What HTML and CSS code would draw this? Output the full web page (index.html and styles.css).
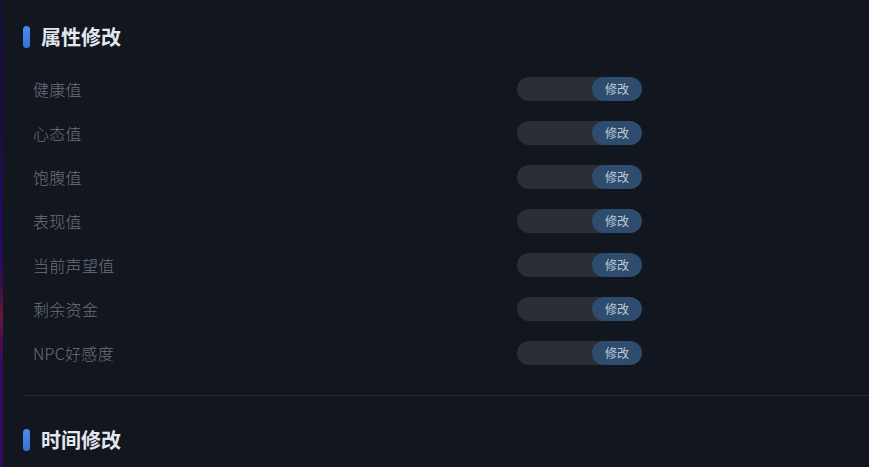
FILE: index.html
```html
<!DOCTYPE html>
<html lang="zh">
<head>
<meta charset="utf-8">
<link rel="stylesheet" href="styles.css">
</head>
<body>
<div class="frame">
  <div class="edge"></div>
  <main class="panel">
    <section class="section">
      <h2 class="section-title"><span class="bar"></span>属性修改</h2>
      <div class="rows">
        <div class="row"><span class="label">健康值</span><div class="field"><input class="input" type="text"><button class="btn">修改</button></div></div>
        <div class="row"><span class="label">心态值</span><div class="field"><input class="input" type="text"><button class="btn">修改</button></div></div>
        <div class="row"><span class="label">饱腹值</span><div class="field"><input class="input" type="text"><button class="btn">修改</button></div></div>
        <div class="row"><span class="label">表现值</span><div class="field"><input class="input" type="text"><button class="btn">修改</button></div></div>
        <div class="row"><span class="label">当前声望值</span><div class="field"><input class="input" type="text"><button class="btn">修改</button></div></div>
        <div class="row"><span class="label">剩余资金</span><div class="field"><input class="input" type="text"><button class="btn">修改</button></div></div>
        <div class="row"><span class="label">NPC好感度</span><div class="field"><input class="input" type="text"><button class="btn">修改</button></div></div>
      </div>
    </section>
    <hr class="divider">
    <section class="section">
      <h2 class="section-title"><span class="bar"></span>时间修改</h2>
    </section>
  </main>
</div>
</body>
</html>
```
FILE: styles.css
```css
html, body {
  margin: 0;
  padding: 0;
  background: #12161e;
  height: 100%;
  overflow: hidden;
}
body {
  font-family: "Noto Sans CJK SC", "Noto Sans", sans-serif;
}
.frame {
  display: flex;
  height: 467px;
}
.edge {
  width: 3px;
  flex: none;
  background: linear-gradient(to bottom, #170f36 0%, #1c0c48 30%, #260b5c 55%, #3a0f4e 62%, #6a1838 68%, #4a0d4e 72%, #2e0a60 82%, #3a0a66 100%);
}
.panel {
  flex: 1;
  padding: 26px 0 0 20px;
}
.section-title {
  display: flex;
  align-items: center;
  gap: 11px;
  margin: 0;
  height: 22px;
  font-size: 20px;
  font-weight: 700;
  color: #e4e7ee;
  line-height: 22px;
}
.bar {
  width: 7px;
  height: 22px;
  border-radius: 4px;
  background: linear-gradient(to bottom, #4a8cf0, #3570d6);
}
.rows {
  margin-top: 19px;
  padding-left: 10px;
}
.row {
  display: grid;
  grid-template-columns: 484px 125px;
  align-items: center;
  height: 44px;
}
.label {
  font-size: 16px;
  font-weight: 300;
  letter-spacing: 0.3px;
  color: #6a717d;
}
.field {
  display: flex;
  height: 24px;
  border-radius: 12px;
  background: #2a2e37;
  overflow: hidden;
}
.input {
  flex: 1;
  min-width: 0;
  border: 0;
  background: transparent;
  outline: none;
  padding: 0;
}
.btn {
  width: 50px;
  flex: none;
  border: 0;
  border-radius: 12px;
  background: #2e4d6e;
  color: #bfcad8;
  font-family: "Noto Sans CJK SC", sans-serif;
  font-size: 12px;
  padding: 0;
  line-height: 24px;
}
.divider {
  margin: 20px 0 33px 1px;
  border: 0;
  border-top: 1px solid #252a33;
  height: 0;
}
```
